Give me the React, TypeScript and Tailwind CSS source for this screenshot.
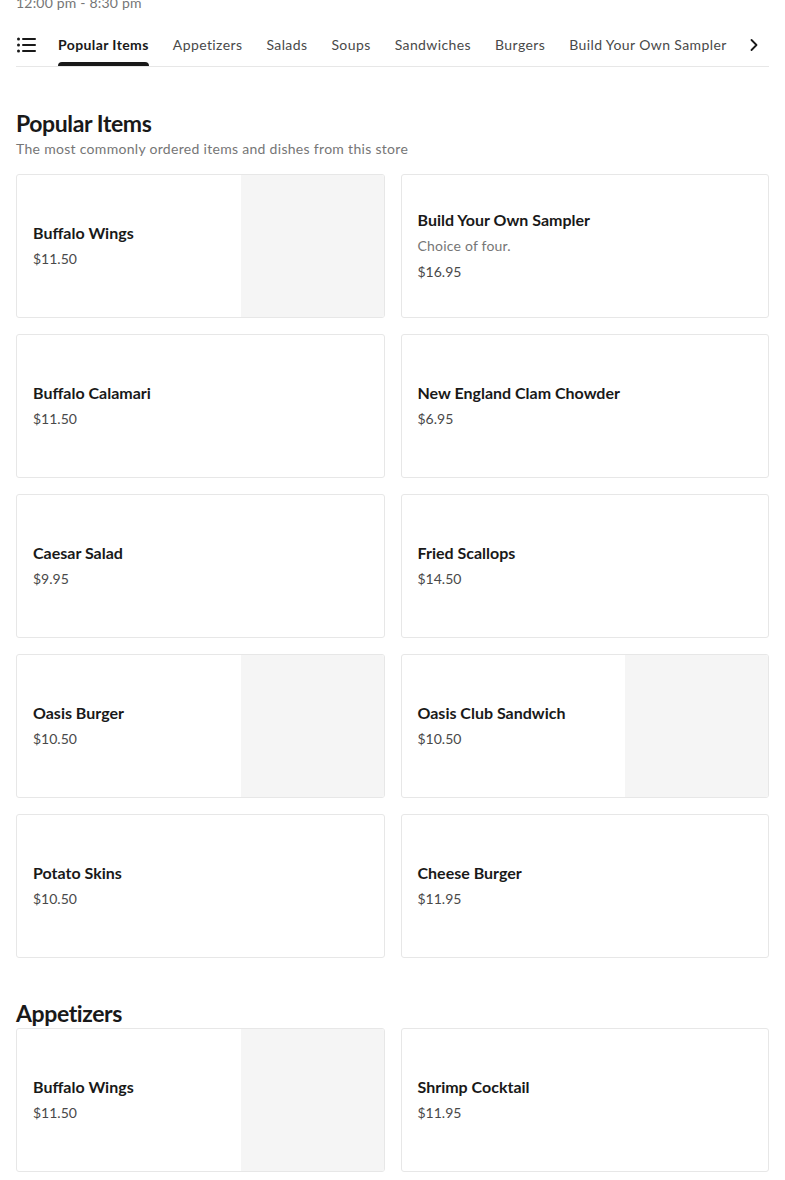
import { ChevronRight } from 'lucide-react';

type Item = { name: string; price: string; desc?: string; image?: boolean };

const popular: Item[] = [
  { name: 'Buffalo Wings', price: '$11.50', image: true },
  { name: 'Build Your Own Sampler', price: '$16.95', desc: 'Choice of four.' },
  { name: 'Buffalo Calamari', price: '$11.50' },
  { name: 'New England Clam Chowder', price: '$6.95' },
  { name: 'Caesar Salad', price: '$9.95' },
  { name: 'Fried Scallops', price: '$14.50' },
  { name: 'Oasis Burger', price: '$10.50', image: true },
  { name: 'Oasis Club Sandwich', price: '$10.50', image: true },
  { name: 'Potato Skins', price: '$10.50' },
  { name: 'Cheese Burger', price: '$11.95' },
];

const appetizers: Item[] = [
  { name: 'Buffalo Wings', price: '$11.50', image: true },
  { name: 'Shrimp Cocktail', price: '$11.95' },
];

const tabs = ['Popular Items', 'Appetizers', 'Salads', 'Soups', 'Sandwiches', 'Burgers', 'Build Your Own Sampler'];

function ListIcon() {
  return (
    <svg width="20" height="16" viewBox="0 0 20 16" fill="none">
      <circle cx="1.5" cy="2" r="1.5" fill="#191919" />
      <circle cx="1.5" cy="8" r="1.5" fill="#191919" />
      <circle cx="1.5" cy="14" r="1.5" fill="#191919" />
      <rect x="5" y="1" width="14" height="2" rx="1" fill="#191919" />
      <rect x="5" y="7" width="14" height="2" rx="1" fill="#191919" />
      <rect x="5" y="13" width="14" height="2" rx="1" fill="#191919" />
    </svg>
  );
}

function ItemCard({ item }: { item: Item }) {
  return (
    <div className="flex h-[144px] border border-[#e7e7e7] rounded-[3px] overflow-hidden bg-white">
      <div className="flex-1 flex flex-col justify-center px-4">
        <div className="text-[16px] font-bold text-[#191919] leading-[22px]">{item.name}</div>
        {item.desc && <div className="text-[14px] text-[#767676] leading-[22px] mt-[4px] tracking-[0.2px]">{item.desc}</div>}
        <div className="text-[14px] text-[#494949] leading-[22px] mt-[4px]">{item.price}</div>
      </div>
      {item.image && <div className="w-[143px] bg-[#f5f5f5]" />}
    </div>
  );
}

export default function App() {
  return (
    <div className="bg-white min-h-[1180px] overflow-hidden px-4 font-['Lato',sans-serif] text-[#191919]">
      <div className="-mt-[7px] text-[14px] leading-[20px] text-[#767676] tracking-[0.2px]">12:00 pm - 8:30 pm</div>

      {/* Category tabs */}
      <div className="mt-[10px] flex items-stretch h-[44px] border-b border-[#e7e7e7]">
        <div className="flex items-center pl-[1px] pr-[21px]">
          <ListIcon />
        </div>
        <div className="flex-1 flex gap-6 overflow-hidden">
          {tabs.map((t, i) => (
            <div key={t} className="relative flex items-center shrink-0 whitespace-nowrap">
              <span className={`text-[14px] tracking-[0.4px] ${i === 0 ? 'font-bold text-[#191919]' : 'text-[#494949]'}`}>{t}</span>
              {i === 0 && <div className="absolute left-0 right-0 bottom-0 h-[4px] rounded-t-[4px] bg-[#191919]" />}
            </div>
          ))}
        </div>
        <div className="flex items-center pl-3 pr-[5px] bg-white">
          <ChevronRight size={20} strokeWidth={2.2} className="text-[#191919]" />
        </div>
      </div>

      {/* Popular items */}
      <div className="mt-[41px]">
        <h2 className="text-[23px] font-bold leading-[30px] tracking-[-0.4px]">Popular Items</h2>
        <p className="text-[14px] text-[#767676] leading-[20px] mt-[1px] tracking-[0.3px]">The most commonly ordered items and dishes from this store</p>
        <div className="mt-[15px] grid grid-cols-2 gap-4">
          {popular.map((item, i) => (
            <ItemCard key={i} item={item} />
          ))}
        </div>
      </div>

      {/* Appetizers */}
      <div className="mt-[40px]">
        <h2 className="text-[23px] font-bold leading-[30px] tracking-[-0.4px]">Appetizers</h2>
        <div className="grid grid-cols-2 gap-4">
          {appetizers.map((item, i) => (
            <ItemCard key={i} item={item} />
          ))}
        </div>
      </div>
    </div>
  );
}
